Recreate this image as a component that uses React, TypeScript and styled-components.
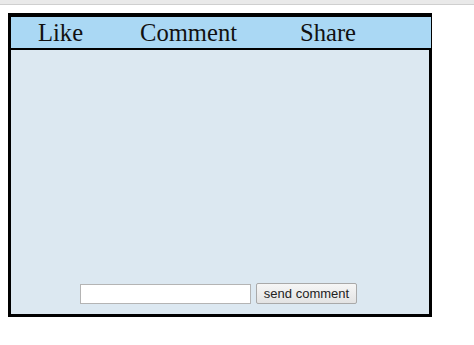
import React from 'react';
import styled, { createGlobalStyle } from 'styled-components';

const GlobalStyle = createGlobalStyle`
    body {
        margin: 0;
        background: #ffffff;
        font-family: "Liberation Serif", "Times New Roman", serif;
    }
`;

const actions = ['Like', 'Comment', 'Share'];

const App = () => {
    return (
        <>
            <GlobalStyle />
            <TopStrip />
            <Page>
                <Panel>
                    <ActionBar>
                        {actions.map((name, index) => (
                            <Action key={`action-${index}`}>{name}</Action>
                        ))}
                    </ActionBar>
                    <CommentArea />
                    <CommentForm onSubmit={(e) => e.preventDefault()}>
                        <CommentInput type="text" />
                        <SendButton type="submit">send comment</SendButton>
                    </CommentForm>
                </Panel>
            </Page>
        </>
    );
}

export default App;


const TopStrip = styled.div`
    height: 4px;
    background: #e9e9e9;
    border-bottom: 1px solid #cfcfcf;
`;

const Page = styled.div`
    padding: 8px 0 0 8px;
`;

const Panel = styled.div`
    box-sizing: border-box;
    width: 424px;
    height: 304px;
    border: 3px solid #000;
    background: #dce8f1;
    display: flex;
    flex-direction: column;
`;

const ActionBar = styled.div`
    box-sizing: border-box;
    height: 34px;
    margin: 0 -3px 0 -1px;
    border: 1px solid #000;
    border-bottom-width: 2px;
    background: #aad8f4;
    display: grid;
    grid-template-columns: 102px 160px auto;
    padding-left: 27px;
    align-items: center;
`;

const Action = styled.div`
    font-size: 24.6px;
    line-height: 30px;
    color: #111;
    cursor: pointer;
`;

const CommentArea = styled.div`
    flex: 1;
`;

const CommentForm = styled.form`
    display: flex;
    justify-content: center;
    align-items: center;
    gap: 5px;
    margin: 0 0 10px -3px;
`;

const CommentInput = styled.input`
    box-sizing: border-box;
    width: 171px;
    height: 20px;
    margin: 0;
    border: 1px solid #b4b4b4;
    background: #fff;
    padding: 1px 3px;
`;

const SendButton = styled.button`
    box-sizing: border-box;
    width: 101px;
    height: 21px;
    margin: 0;
    padding: 0;
    border: 1px solid #a9a9a9;
    border-radius: 2px;
    background: linear-gradient(#f6f6f6, #e3e3e3);
    font-family: "Liberation Sans", Arial, sans-serif;
    font-size: 13px;
    color: #222;
`;
